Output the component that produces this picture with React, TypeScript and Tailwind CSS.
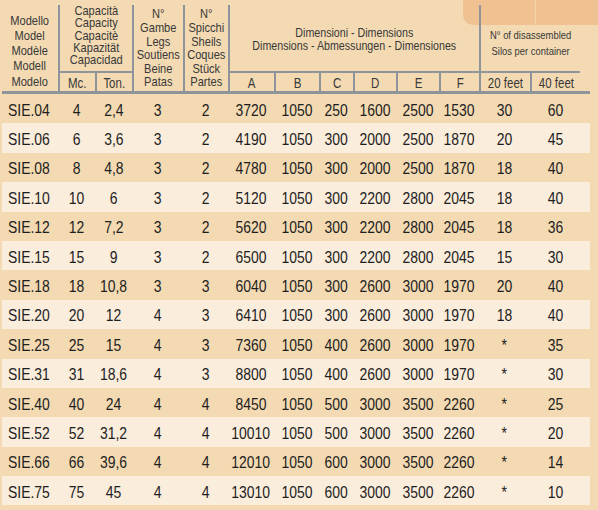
import React from "react";

const cols =
  "grid grid-cols-[56px_37px_37px_51px_45px_46px_45px_34px_43px_43px_40px_51px_50px_10px]";

const rows: string[][] = [
  ["SIE.04", "4", "2,4", "3", "2", "3720", "1050", "250", "1600", "2500", "1530", "30", "60"],
  ["SIE.06", "6", "3,6", "3", "2", "4190", "1050", "300", "2000", "2500", "1870", "20", "45"],
  ["SIE.08", "8", "4,8", "3", "2", "4780", "1050", "300", "2000", "2500", "1870", "18", "40"],
  ["SIE.10", "10", "6", "3", "2", "5120", "1050", "300", "2200", "2800", "2045", "18", "40"],
  ["SIE.12", "12", "7,2", "3", "2", "5620", "1050", "300", "2200", "2800", "2045", "18", "36"],
  ["SIE.15", "15", "9", "3", "2", "6500", "1050", "300", "2200", "2800", "2045", "15", "30"],
  ["SIE.18", "18", "10,8", "3", "3", "6040", "1050", "300", "2600", "3000", "1970", "20", "40"],
  ["SIE.20", "20", "12", "4", "3", "6410", "1050", "300", "2600", "3000", "1970", "18", "40"],
  ["SIE.25", "25", "15", "4", "3", "7360", "1050", "400", "2600", "3000", "1970", "*", "35"],
  ["SIE.31", "31", "18,6", "4", "3", "8800", "1050", "400", "2600", "3000", "1970", "*", "30"],
  ["SIE.40", "40", "24", "4", "4", "8450", "1050", "500", "3000", "3500", "2260", "*", "25"],
  ["SIE.52", "52", "31,2", "4", "4", "10010", "1050", "500", "3000", "3500", "2260", "*", "20"],
  ["SIE.66", "66", "39,6", "4", "4", "12010", "1050", "600", "3000", "3500", "2260", "*", "14"],
  ["SIE.75", "75", "45", "4", "4", "13010", "1050", "600", "3000", "3500", "2260", "*", "10"],
];

// text in the original is narrow Arial; squeeze Liberation Sans to match
function Lines({ items }: { items: string[] }) {
  return (
    <div className="flex scale-x-[0.82] flex-col items-center whitespace-nowrap">
      {items.map((t) => (
        <div key={t}>{t}</div>
      ))}
    </div>
  );
}

function SubCell({ label, col }: { label: string; col: string }) {
  return (
    <div
      className={`${col} row-start-2 flex items-center justify-center border-l-2 border-t-2 border-[#8f939b] pt-[1px] text-[14px] leading-none`}
    >
      <span className="inline-block scale-x-[0.82] whitespace-nowrap">{label}</span>
    </div>
  );
}

export default function App() {
  return (
    <div className="relative h-[510px] w-[598px] overflow-hidden bg-[#f3dab3] font-['Liberation_Sans',Arial,sans-serif]">
      {/* decorative tab top right */}
      <div className="absolute left-[463px] top-0 flex h-[25px] w-[150px] rounded-bl-[10px] bg-[#f1c291]">
        <div className="w-[73px] border-r border-[#f6d2a8]" />
      </div>

      <div className="relative ml-[2px] w-[588px] pt-[5px] text-[#383838]">
        <div className={`${cols} grid-rows-[66px_20px]`}>
          <div className="col-start-1 row-span-2 row-start-1 flex flex-col items-center justify-end pb-[2px] text-[13.5px] leading-[15.3px]">
            <Lines items={["Modello", "Model", "Modèle", "Modell", "Modelo"]} />
          </div>
          <div className="col-span-2 col-start-2 row-start-1 flex flex-col items-center border-l-2 border-[#8f939b] text-[13.5px] leading-[12.3px]">
            <Lines items={["Capacità", "Capacity", "Capacitè", "Kapazität", "Capacidad"]} />
          </div>
          <SubCell col="col-start-2" label="Mc." />
          <SubCell col="col-start-3" label="Ton." />
          <div className="col-start-4 row-span-2 row-start-1 flex flex-col items-center justify-end border-l-2 border-[#8f939b] pb-[2px] text-[13.5px] leading-[13.6px]">
            <Lines items={["N°", "Gambe", "Legs", "Soutiens", "Beine", "Patas"]} />
          </div>
          <div className="col-start-5 row-span-2 row-start-1 flex flex-col items-center justify-end border-l-2 border-[#8f939b] pb-[2px] text-[13.5px] leading-[13.6px]">
            <Lines items={["N°", "Spicchi", "Sheils", "Coques", "Stück", "Partes"]} />
          </div>
          <div className="col-span-6 col-start-6 row-start-1 flex flex-col items-center justify-center border-l-2 border-[#8f939b] pt-[1px] text-[13px] leading-[13px]">
            <Lines items={["Dimensioni - Dimensions", "Dimensions - Abmessungen - Dimensiones"]} />
          </div>
          <SubCell col="col-start-6" label="A" />
          <SubCell col="col-start-7" label="B" />
          <SubCell col="col-start-8" label="C" />
          <SubCell col="col-start-9" label="D" />
          <SubCell col="col-start-10" label="E" />
          <SubCell col="col-start-11" label="F" />
          <div className="col-span-2 col-start-12 row-start-1 flex flex-col items-center justify-center border-l-2 border-[#8f939b] pt-[9px] text-[11.5px] leading-[16px]">
            <Lines items={["N° of disassembled", "Silos per container"]} />
          </div>
          <SubCell col="col-start-12" label="20 feet" />
          <SubCell col="col-start-13" label="40 feet" />
        </div>
        <div className="h-[3px] bg-[#8f939b]" />

        <div className="text-[17px] leading-none text-[#1e1e1e]">
          {rows.map((r, i) => (
            <div
              key={r[0]}
              className={`${cols} h-[29.4px] items-center pt-[3px] ${i % 2 === 1 ? "bg-[#faeddc]" : ""}`}
            >
              {r.map((v, j) =>
                j === 0 ? (
                  <div key={j} className="pl-[6px]">
                    <span className="inline-block origin-left scale-x-[0.82]">{v}</span>
                  </div>
                ) : (
                  <div key={j} className="flex justify-center">
                    <span className="inline-block scale-x-[0.82]">{v}</span>
                  </div>
                )
              )}
            </div>
          ))}
        </div>
      </div>
    </div>
  );
}
